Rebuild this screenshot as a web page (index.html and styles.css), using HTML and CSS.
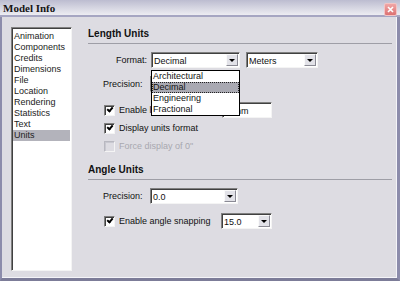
FILE: index.html
```html
<!DOCTYPE html>
<html lang="en">
<head>
    <meta charset="UTF-8">
    <title>Model Info</title>
    <link rel="stylesheet" href="styles.css">
</head>
<body>
    <div class="window">
        <div class="titlebar">
            <span class="title">Model Info</span>
            <span class="close">
                <svg width="11" height="11" viewBox="0 0 11 11">
                    <path d="M3 3 L8 8 M8 3 L3 8" stroke="#fff" stroke-width="1.6"/>
                </svg>
            </span>
        </div>

        <div class="main">
            <ul class="list">
                <li>Animation</li>
                <li>Components</li>
                <li>Credits</li>
                <li>Dimensions</li>
                <li>File</li>
                <li>Location</li>
                <li>Rendering</li>
                <li>Statistics</li>
                <li>Text</li>
                <li class="sel">Units</li>
            </ul>

            <div class="panel">
                <div class="heading">Length Units</div>

                <div class="row format">
                    <span class="lbl">Format:</span>
                    <div class="combo-wrap">
                        <div class="combo w89"><span>Decimal</span><i class="arrow"></i></div>
                        <ul class="popup">
                            <li>Architectural</li>
                            <li class="hi">Decimal</li>
                            <li>Engineering</li>
                            <li>Fractional</li>
                        </ul>
                    </div>
                    <div class="combo meters"><span>Meters</span><i class="arrow"></i></div>
                </div>

                <div class="row prec">
                    <span class="lbl left">Precision:</span>
                    <div class="combo w89"><span>0</span><i class="arrow"></i></div>
                </div>

                <div class="row snap">
                    <span class="check on"></span>
                    <span class="ctext wide">Enable length snapping</span>
                    <div class="field">1 mm</div>
                </div>

                <div class="row disp">
                    <span class="check on"></span>
                    <span class="ctext">Display units format</span>
                </div>

                <div class="row force">
                    <span class="check off"></span>
                    <span class="ctext dim">Force display of 0"</span>
                </div>

                <div class="heading angle">Angle Units</div>

                <div class="row aprec">
                    <span class="lbl left">Precision:</span>
                    <div class="combo w88"><span>0.0</span><i class="arrow"></i></div>
                </div>

                <div class="row asnap">
                    <span class="check on"></span>
                    <span class="ctext wide">Enable angle snapping</span>
                    <div class="combo w51"><span>15.0</span><i class="arrow"></i></div>
                </div>
            </div>
        </div>
    </div>
</body>
</html>
```

FILE: styles.css
```css
:root {
    --face: #dddce2;
    --frame: #8c8cab;
    --text: #111;
}

body {
    margin: 0;
    font-family: "Liberation Sans", Arial, sans-serif;
    font-size: 9px;
    color: var(--text);
}

.window {
    width: 400px;
    height: 281px;
    display: flex;
    flex-direction: column;
    background: var(--face);
}

/* title bar */
.titlebar {
    height: 17px;
    box-sizing: border-box;
    padding: 2px 4px 0 3px;
    line-height: 13px;
    display: flex;
    justify-content: space-between;
    align-items: flex-start;
    background: linear-gradient(#bcbcd0, #ededf2);
    border-bottom: 2px solid #a6a6c2;
}

.title {
    font: bold 11px "Liberation Serif", serif;
    line-height: 13px;
    color: #151515;
}

.close {
    width: 11px;
    height: 11px;
    margin-top: 2px;
    display: block;
    background: linear-gradient(#f0a6a6, #dc7272);
    border-radius: 1px;
    box-shadow: 0 0 0 1px #f4c4c4;
}

.close svg {
    display: block;
}

/* body */
.main {
    flex: 1;
    display: flex;
    gap: 16px;
    padding: 10px 5px 7px 9px;
    border-left: 2px solid var(--frame);
    border-right: 3px solid var(--frame);
    border-bottom: 3px solid #7c7c98;
    box-shadow: inset -1px -1px #f4f4f8;
}

.list {
    width: 61px;
    box-sizing: border-box;
    margin: 0;
    padding: 3px 1px 2px 1px;
    list-style: none;
    background: #fff;
    border: 1px solid;
    border-color: #808080 #f4f4f4 #f4f4f4 #808080;
    box-shadow: inset 1px 1px #404040;
}

.list li {
    height: 11px;
    line-height: 10px;
    padding-left: 1px;
    color: #222;
}

.list li.sel {
    background: #b3b3bb;
}

.panel {
    flex: 1;
    display: flex;
    flex-direction: column;
}

.heading {
    font-weight: bold;
    font-size: 10px;
    line-height: 12px;
    padding: 1px 0 3px;
    border-bottom: 1px solid #9e9ea6;
}

.heading.angle {
    margin-top: 10px;
    padding-top: 0;
}

.row {
    height: 16px;
    display: flex;
    align-items: center;
    padding-left: 15px;
}

.row.format { margin-top: 8px; }
.row.prec { margin-top: 8px; }
.row.snap { margin-top: 10px; }
.row.disp { margin-top: 2px; }
.row.force { margin-top: 2px; }
.row.aprec { margin-top: 8px; }
.row.asnap { margin-top: 9px; }

.lbl {
    width: 48px;
    box-sizing: border-box;
    padding-right: 4px;
    text-align: right;
}

.lbl.left {
    text-align: left;
    width: 47px;
}

/* combo boxes */
.combo-wrap {
    position: relative;
}

.combo {
    height: 16px;
    box-sizing: border-box;
    display: flex;
    align-items: center;
    justify-content: space-between;
    padding: 1px 1px 1px 2px;
    background: #fff;
    border: 1px solid;
    border-color: #808080 #f4f4f4 #f4f4f4 #808080;
    box-shadow: inset 1px 1px #404040;
}

.combo span {
    padding-top: 1px;
}

.w89 { width: 89px; }
.w88 { width: 88px; }
.w51 { width: 51px; }

.meters {
    width: 72px;
    margin-left: 6px;
}

.arrow {
    width: 12px;
    height: 12px;
    box-sizing: border-box;
    display: flex;
    align-items: center;
    justify-content: center;
    background: #e2e2e8;
    border: 1px solid;
    border-color: #fafafa #8a8a94 #8a8a94 #fafafa;
}

.arrow::after {
    content: "";
    border-left: 3px solid transparent;
    border-right: 3px solid transparent;
    border-top: 3px solid #000;
}

.popup {
    position: absolute;
    top: 18px;
    left: 0;
    width: 89px;
    box-sizing: border-box;
    margin: 0;
    padding: 0;
    list-style: none;
    background: #fff;
    border: 1px solid #000;
    z-index: 2;
}

.popup li {
    height: 11px;
    box-sizing: border-box;
    line-height: 10px;
    padding-left: 1px;
}

.popup li.hi {
    background: #a9a9b2;
    outline: 1px dotted #222;
    outline-offset: -1px;
}

/* checkboxes */
.check {
    width: 11px;
    height: 11px;
    box-sizing: border-box;
    margin-left: 1px;
    border: 1px solid;
    border-color: #808080 #f4f4f4 #f4f4f4 #808080;
    box-shadow: inset 1px 1px #404040;
    background: #fff;
    display: flex;
    align-items: center;
    justify-content: center;
}

.check.on::after {
    content: "";
    width: 4px;
    height: 2px;
    margin: -2px 0 0 1px;
    border-left: 2px solid #000;
    border-bottom: 2px solid #000;
    transform: rotate(-50deg);
}

.check.off {
    background: var(--face);
    border-color: #b8b8c0 #f4f4f4 #f4f4f4 #b8b8c0;
    box-shadow: inset 1px 1px #c8c8d0;
}

.ctext {
    margin-left: 4px;
}

.ctext.wide {
    width: 102px;
}

.ctext.dim {
    color: #a8a8b0;
}

.field {
    width: 50px;
    height: 16px;
    box-sizing: border-box;
    padding: 3px 0 0 3px;
    margin-left: 1px;
    background: #fff;
    border: 1px solid;
    border-color: #808080 #f4f4f4 #f4f4f4 #808080;
    box-shadow: inset 1px 1px #404040;
}
```
